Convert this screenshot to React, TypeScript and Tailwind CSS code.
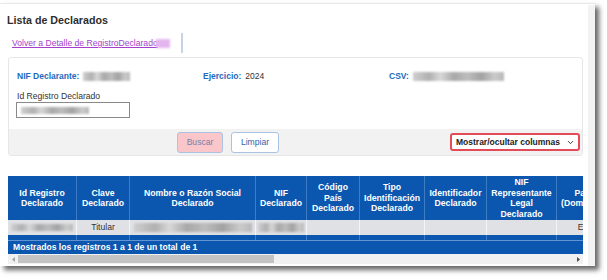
import { ChevronDown } from 'lucide-react'

const cols = [
  { w: 'w-[69px]', head: ['Id Registro', 'Declarado'] },
  { w: 'w-[53px]', head: ['Clave', 'Declarado'] },
  { w: 'w-[126px]', head: ['Nombre o Razón Social', 'Declarado'] },
  { w: 'w-[51px]', head: ['NIF', 'Declarado'] },
  { w: 'w-[53px]', head: ['Código', 'País', 'Declarado'] },
  { w: 'w-[65px]', head: ['Tipo', 'Identificación', 'Declarado'] },
  { w: 'w-[62px]', head: ['Identificador', 'Declarado'] },
  { w: 'w-[70px]', head: ['NIF', 'Representante', 'Legal', 'Declarado'] },
  { w: 'w-[54px]', head: ['País', '(Domicilio)'] },
]

// blurred placeholder for hidden data
function Blur({ w, h = 'h-[9px]' }: { w: string; h?: string }) {
  return (
    <span
      className={`inline-block ${w} ${h} blur-[0.8px] bg-[linear-gradient(90deg,#cfcfcf_0%,#b0b0b0_18%,#d8d8d8_30%,#a8a8a8_45%,#bdbdbd_60%,#a2a2a2_75%,#cbcbcb_90%,#b8b8b8_100%)]`}
    />
  )
}

export default function App() {
  return (
    <div className="h-[280px] w-[607px] overflow-hidden bg-white font-['Liberation_Sans',Arial,sans-serif]">
      <div className="mt-[3px] flex h-[263px] w-[595px] border-t border-[#e8e8e8] bg-white shadow-[4px_4px_5px_rgba(0,0,0,0.6)]">
        <div className="w-[588px] pl-[8px] pt-[9px]">
          {/* Titulo */}
          <h1 className="-ml-px text-[10.7px] font-bold leading-[14px] text-[#2e2e2e]">Lista de Declarados</h1>

          {/* Volver */}
          <div className="mt-[6px] flex h-[20px] w-[175px] items-center border-r-2 border-[#c5d3e6]">
            <a className="ml-[4px] text-[8.6px] leading-[12px] text-[#a33fcb] underline">Volver a Detalle de RegistroDeclarado</a>
            <span className="-ml-[2px] inline-block h-[9px] w-[14px] bg-[#e4b6f0] blur-[0.8px]" />
          </div>

          {/* Filtros */}
          <div className="mt-[4px] w-[575px] overflow-hidden rounded-[3px] border border-[#e6e6e6]">
            <div className="pb-[11px] pl-[8px] pr-[7px] pt-[12px]">
              <div className="grid grid-cols-3 text-[8.5px] leading-[12px]">
                <div className="flex items-center gap-[4px]">
                  <span className="font-bold text-[#1f69c0]">NIF Declarante:</span>
                  <Blur w="w-[47px]" />
                </div>
                <div className="flex items-center gap-[4px]">
                  <span className="font-bold text-[#1f69c0]">Ejercicio:</span>
                  <span className="text-[#333]">2024</span>
                </div>
                <div className="flex items-center gap-[4px]">
                  <span className="font-bold text-[#1f69c0]">CSV:</span>
                  <Blur w="w-[91px]" />
                </div>
              </div>
              <div className="mt-[8px] text-[8.6px] leading-[12px] text-[#333]">Id Registro Declarado</div>
              <div className="-ml-px flex h-[16px] w-[114px] items-center border border-[#8a8a8a] px-[4px]">
                <Blur w="w-[68px]" h="h-[7px]" />
              </div>
            </div>
            <div className="flex h-[26px] items-center bg-[#f2f2f2] pr-[2px]">
              <button className="ml-[168px] h-[21px] w-[46px] rounded-[3px] border border-[#a9c3e2] bg-[#fbc6ca] text-[8.6px] text-[#7a7ea6]">
                Buscar
              </button>
              <button className="ml-[8px] h-[21px] w-[48px] rounded-[3px] border border-[#a9c3e2] bg-white text-[8.6px] text-[#2f66ad]">
                Limpiar
              </button>
              <div className="ml-auto flex h-[18px] w-[130px] items-center justify-between rounded-[3px] border-2 border-[#e44b58] bg-white pl-[4px] pr-[3px]">
                <span className="text-[8.5px] font-bold text-[#222]">Mostrar/ocultar columnas</span>
                <ChevronDown size={9} strokeWidth={2.5} className="text-[#333]" />
              </div>
            </div>
          </div>

          {/* Tabla */}
          <div className="mt-[20px] w-[575px] overflow-hidden">
            <div className="w-[603px]">
              <div className="flex h-[44px] bg-[#0b56ae]">
                {cols.map((c, i) => (
                  <div
                    key={i}
                    className={`${c.w} flex shrink-0 flex-col items-center justify-center border-r border-[#3f7cc4] text-center text-[8.7px] font-bold leading-[10.5px] text-white`}
                  >
                    {c.head.map((l) => (
                      <span key={l} className="whitespace-nowrap">{l}</span>
                    ))}
                  </div>
                ))}
              </div>
              <div className="flex h-[15px] bg-[#dfe1e5] text-[8.6px] text-[#333]">
                {cols.map((c, i) => (
                  <div key={i} className={`${c.w} flex shrink-0 items-center justify-center border-r border-[#f3f4f6]`}>
                    {i === 0 && <Blur w="w-[62px]" h="h-[7px]" />}
                    {i === 1 && 'Titular'}
                    {i === 2 && <Blur w="w-[118px]" />}
                    {i === 3 && <Blur w="w-[46px]" />}
                    {i === 8 && 'ES'}
                  </div>
                ))}
              </div>
              <div className="flex h-[5px] bg-[#0b56ae]">
                {cols.map((c, i) => (
                  <div key={i} className={`${c.w} shrink-0 border-r border-[#3f7cc4]`} />
                ))}
              </div>
              <div className="h-px bg-[#6394d1]" />
            </div>
            <div className="flex h-[13px] items-center bg-[#0b56ae] pl-[5px] text-[8.6px] font-bold text-white">
              Mostrados los registros 1 a 1 de un total de 1
            </div>
            <div className="flex h-[10px] items-center bg-[#f1f1f1] py-px">
              <div className="flex w-[10px] justify-center">
                <svg width="3" height="5" viewBox="0 0 3 5"><path d="M3 0 L0 2.5 L3 5 Z" fill="#a3a3a3" /></svg>
              </div>
              <div className="h-[8px] w-[256px] bg-[#c4c4c4]" />
              <div className="ml-auto flex w-[10px] justify-center">
                <svg width="3" height="5" viewBox="0 0 3 5"><path d="M0 0 L3 2.5 L0 5 Z" fill="#505050" /></svg>
              </div>
            </div>
          </div>
        </div>
        <div className="mt-px w-[7px] bg-[#f3f3f3]" />
      </div>
    </div>
  )
}
